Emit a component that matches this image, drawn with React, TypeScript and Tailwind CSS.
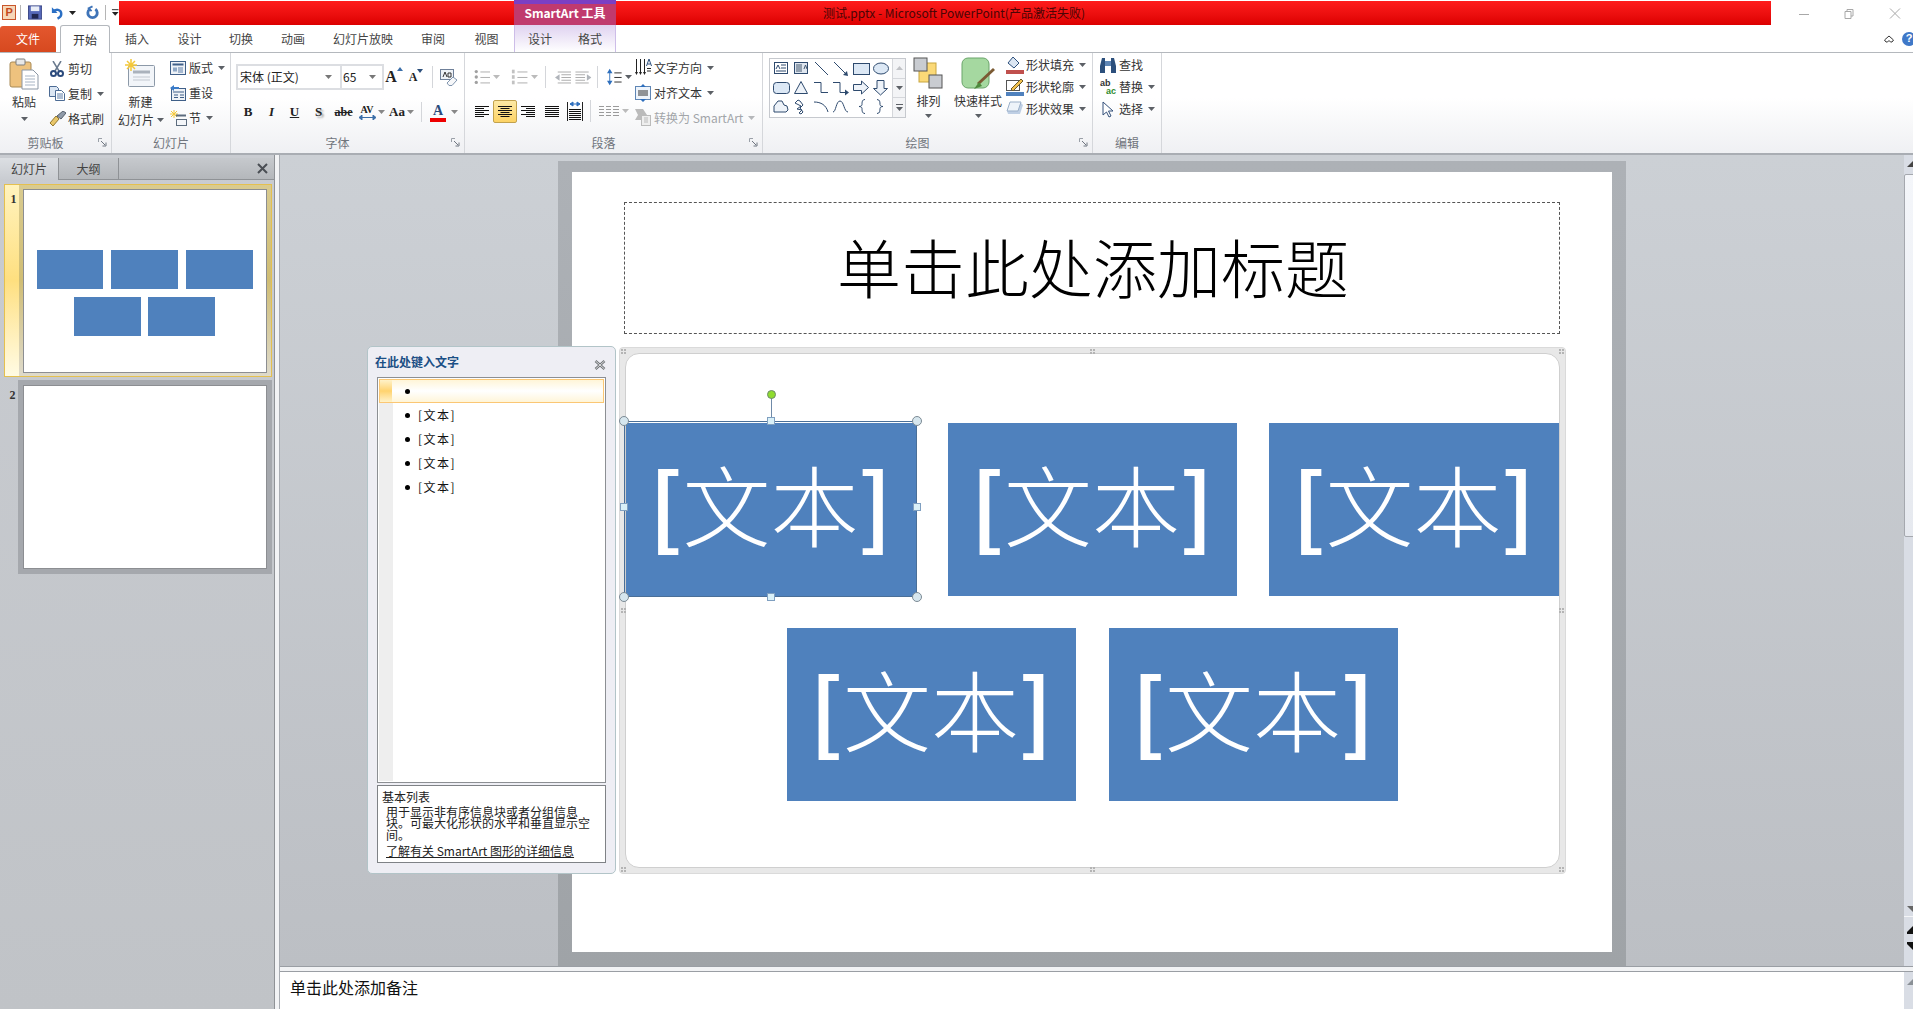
import React from "react";

const Caret = ({ c = "#5c6066" }: { c?: string }) => (
  <svg width="7" height="4" viewBox="0 0 7 4" className="shrink-0">
    <path d="M0 0h7L3.500 4z" fill={c} />
  </svg>
);

const Launcher = () => (
  <svg width="9" height="9" viewBox="0 0 9 9" className="absolute right-[4px] top-[5px]">
    <path d="M0.500 4V0.500H4" fill="none" stroke="#9aa0a8" />
    <path d="M3 3l4 4M8 4.500V8H4.500" fill="none" stroke="#6f7680" />
  </svg>
);

const Sep = ({ h = 22, ml = 0, mr = 0 }: { h?: number; ml?: number; mr?: number }) => (
  <div style={{ height: h, marginLeft: ml, marginRight: mr }} className="w-px bg-[#d4d6da] shrink-0" />
);

const Group = ({
  w,
  label,
  launcher,
  children,
}: {
  w: number;
  label: string;
  launcher?: boolean;
  children: React.ReactNode;
}) => (
  <div style={{ width: w }} className="flex flex-col shrink-0 border-r border-[#d5d7db] h-full">
    <div className="h-[81px] flex">{children}</div>
    <div className={`relative h-[20px] flex items-center justify-center text-[12px] text-[#70757c] ${launcher ? "pr-[20px]" : ""}`}>
      {label}
      {launcher && <Launcher />}
    </div>
  </div>
);

const Row = ({
  icon,
  text,
  caret,
  h = 25,
  gray,
}: {
  icon: React.ReactNode;
  text: string;
  caret?: boolean;
  h?: number;
  gray?: boolean;
}) => (
  <div style={{ height: h }} className={`flex items-center text-[12px] whitespace-nowrap ${gray ? "text-[#a2a5a9]" : "text-[#333]"}`}>
    <div className="w-[18px] flex justify-center shrink-0 mr-[2px]">{icon}</div>
    {text}
    {caret && (
      <span className="ml-[5px]">
        <Caret c={gray ? "#b5b7ba" : "#5c6066"} />
      </span>
    )}
  </div>
);

const Lines = ({ kind }: { kind: "l" | "c" | "r" | "j" }) => {
  const rows = [0, 1, 2, 3, 4, 5];
  const x = (i: number) => {
    const short = i % 2 === 1;
    if (!short || kind === "j") return [0, 14];
    if (kind === "l") return [0, 9];
    if (kind === "r") return [5, 14];
    return [2.500, 11.500];
  };
  return (
    <svg width="14" height="13" viewBox="0 0 14 13">
      {rows.map((i) => (
        <path key={i} d={`M${x(i)[0]} ${i * 2 + 1.500}H${x(i)[1]}`} stroke="#111" />
      ))}
    </svg>
  );
};

const ListIcon = ({ numbered }: { numbered?: boolean }) => (
  <svg width="18" height="16" viewBox="0 0 18 16">
    {[2, 8, 14].map((y) => (
      <g key={y}>
        {numbered ? (
          <path d={`M1 ${y - 2}h3v4h-3z`} fill="#a8a8a8" opacity="0.7" />
        ) : (
          <circle cx="2.500" cy={y} r="1.800" fill="#a0a0a0" />
        )}
        <path d={`M7 ${y + 0.500}H18`} stroke="#a8a8a8" />
      </g>
    ))}
  </svg>
);

const IndentIcon = ({ flip }: { flip?: boolean }) => (
  <svg width="18" height="15" viewBox="0 0 18 15" style={flip ? { transform: "scaleX(-1)" } : undefined}>
    <path d="M0 7.500l5-3.500v7z" fill="#b0b4ba" />
    {[1, 4, 7, 10, 13].map((y, i) => (
      <path key={y} d={`M${i === 0 || i === 4 ? 3 : 7} ${y + 0.500}H18`} stroke="#a6a6a6" />
    ))}
  </svg>
);

const shapes: React.ReactNode[] = [
  <g key="1"><rect x="1.500" y="1.500" width="13" height="11" fill="#fff" stroke="#2e4a6e" /><path d="M3 8l2-4 2 4M8 4h5M8 7h5M3 10h10" stroke="#2e4a6e" fill="none" /></g>,
  <g key="2"><rect x="1.500" y="1.500" width="13" height="11" fill="#dfe6ef" stroke="#2e4a6e" /><path d="M4 3v8M6 3v8M8 3v8M11 8l1.500-4 1.500 4" stroke="#44586f" fill="none" /></g>,
  <path key="3" d="M2 1l13 13" stroke="#2e4a6e" fill="none" />,
  <g key="4"><path d="M1 1l12 12" stroke="#2e4a6e" /><path d="M15 15l-5-1 4-4z" fill="#2e4a6e" /></g>,
  <rect key="5" x="0.500" y="2.500" width="16" height="11" fill="#dce8f5" stroke="#2e4a6e" />,
  <ellipse key="6" cx="8" cy="7.500" rx="7.500" ry="5.500" fill="#dce8f5" stroke="#2e4a6e" />,
  <rect key="7" x="0.500" y="2.500" width="16" height="11" rx="3" fill="#dce8f5" stroke="#2e4a6e" />,
  <path key="8" d="M8 1.500l6.500 12H1.500z" fill="#eef3f9" stroke="#2e4a6e" />,
  <path key="9" d="M1 2.500h7v10h7" fill="none" stroke="#2e4a6e" />,
  <g key="10"><path d="M0 2.500h7v10h6" fill="none" stroke="#2e4a6e" /><path d="M16 12.500l-4-3v6z" fill="#2e4a6e" /></g>,
  <path key="11" d="M0.500 4.500h8V1l7 6.500-7 6.500v-3.500h-8z" fill="#eef3f9" stroke="#2e4a6e" />,
  <path key="12" d="M4 0.500h7v8h3.500L7.500 15 0.500 8.500H4z" fill="#eef3f9" stroke="#2e4a6e" />,
  <path key="13" d="M1 13V7l4-5h4l2 4 3 1 1 4-2 2z" fill="#eef3f9" stroke="#2e4a6e" />,
  <path key="14" d="M5 1l-3 3 6 3-4 3 5 1-3 3 2 1 2-2-3-4 3-3-3-4z" fill="none" stroke="#2e4a6e" />,
  <path key="15" d="M1 3c7 0 12 3 14 10" fill="none" stroke="#2e4a6e" />,
  <path key="16" d="M0 13c3 0 3-11 7-11s4 11 8 11" fill="none" stroke="#2e4a6e" />,
  <path key="17" d="M12 0.500c-3 0-3 3-3 5 0 1-1 2-3 2 2 0 3 1 3 2 0 2 0 5 3 5" fill="none" stroke="#2e4a6e" />,
  <path key="18" d="M4 0.500c3 0 3 3 3 5 0 1 1 2 3 2-2 0-3 1-3 2 0 2 0 5-3 5" fill="none" stroke="#2e4a6e" />,
];

const Ribbon = () => (
  <div className="h-[102px] flex bg-gradient-to-b from-white from-45% to-[#eff0f3] border-b-2 border-[#a9adb3]">
    <Group w={112} label="剪贴板" launcher>
      <div className="w-[48px] flex flex-col items-center pt-[5px]">
        <svg width="30" height="32" viewBox="0 0 30 32">
          <rect x="1" y="4" width="21" height="25" rx="2" fill="#eec27e" stroke="#a88a56" />
          <rect x="7" y="1" width="9" height="6" rx="1" fill="#e8e8e8" stroke="#7d7d7d" />
          <path d="M13 12h11l5 5v14H13z" fill="#fff" stroke="#8b97a5" />
          <path d="M16 18h10M16 21h10M16 24h10M16 27h10" stroke="#a7b4c4" />
        </svg>
        <div className="h-[20px] mt-[2px] flex items-center text-[12px] text-[#333]">粘贴</div>
        <div className="mt-[5px]"><Caret /></div>
      </div>
      <div className="flex flex-col pt-[3px]">
        <Row
          text="剪切"
          icon={
            <svg width="14" height="16" viewBox="0 0 14 16">
              <path d="M3 0l6 10M11 0L5 10" stroke="#6a7a8e" strokeWidth="1.500" />
              <circle cx="3.500" cy="12.500" r="2.500" fill="none" stroke="#2b4a7c" strokeWidth="2" />
              <circle cx="10.500" cy="12.500" r="2.500" fill="none" stroke="#2b4a7c" strokeWidth="2" />
            </svg>
          }
        />
        <Row
          text="复制"
          caret
          icon={
            <svg width="16" height="15" viewBox="0 0 16 15">
              <path d="M0.500 0.500h7l2 2v8h-9z" fill="#dbe6f3" stroke="#4c6b94" />
              <path d="M6.500 4.500h6l3 3v7h-9z" fill="#fff" stroke="#4c6b94" />
              <path d="M8 8h6M8 10h6M8 12h6" stroke="#5f7ea8" />
            </svg>
          }
        />
        <Row
          text="格式刷"
          icon={
            <svg width="17" height="15" viewBox="0 0 17 15">
              <path d="M1 12l6-7 3 3-6 7z" fill="#e8c66a" stroke="#93782f" />
              <path d="M8 5l6-5 3 2-5 6z" fill="#8f9aa8" stroke="#555e6a" />
            </svg>
          }
        />
      </div>
    </Group>
    <Group w={119} label="幻灯片">
      <div className="w-[56px] flex flex-col items-center pt-[6px]">
        <svg width="30" height="29" viewBox="0 0 30 29">
          <rect x="3.500" y="6.500" width="26" height="21" rx="1" fill="#f2f5f9" stroke="#8c99a8" />
          <path d="M8 13h17" stroke="#aab2bc" strokeWidth="3" />
          <path d="M8 18h17M8 21h17" stroke="#c3c9d1" />
          <path d="M6 0v12M0 6h12M2 2l8 8M10 2l-8 8" stroke="#f4c83a" strokeWidth="1.500" />
        </svg>
        <div className="h-[20px] mt-[4px] ml-[1px] flex items-center text-[12px] text-[#333]">新建</div>
        <div className="h-[16px] flex items-center gap-[3px] text-[12px] text-[#333] whitespace-nowrap ml-[2px]">幻灯片<Caret /></div>
      </div>
      <div className="flex flex-col pt-[2px] pl-[1px]">
        <Row
          text="版式"
          caret
          icon={
            <svg width="16" height="14" viewBox="0 0 16 14">
              <rect x="0.500" y="0.500" width="15" height="13" fill="#eef2f7" stroke="#3f5f88" />
              <path d="M2.500 3.500h11" stroke="#3f5f88" strokeWidth="2" />
              <path d="M3 6.500h4v4H3z" fill="#8fa8c6" />
              <path d="M8 7h5M8 9h5M8 11h5" stroke="#5f7ea8" />
            </svg>
          }
        />
        <Row
          text="重设"
          icon={
            <svg width="16" height="16" viewBox="0 0 16 16">
              <rect x="1.500" y="3.500" width="14" height="12" fill="#eef2f7" stroke="#3f5f88" />
              <path d="M3 7h11M4 10h4M4 12.500h4M10 10h4M10 12.500h4" stroke="#3f5f88" />
              <path d="M0 3l4-3v2h5v2H4v2z" fill="#3a7bc8" />
            </svg>
          }
        />
        <Row
          text="节"
          caret
          icon={
            <svg width="17" height="16" viewBox="0 0 17 16">
              <path d="M4 0v8M0 4h8M1 1l6 6M7 1L1 7" stroke="#f4c83a" />
              <path d="M6 5.500h10" stroke="#5d6c7e" strokeWidth="2" />
              <rect x="6.500" y="9.500" width="10" height="6" fill="#f4f6f9" stroke="#5d6c7e" />
            </svg>
          }
        />
      </div>
    </Group>
    <Group w={234} label="字体" launcher>
      <div className="flex flex-col pl-[5px] pt-[11px]">
        <div className="flex items-center h-[26px]">
          <div className="w-[104px] h-[26px] border-2 border-r-0 border-[#dcdee2] bg-white flex items-center justify-between pl-[2px] pr-[8px] text-[12px] text-[#222]">
            宋体 (正文)
            <Caret c="#777" />
          </div>
          <div className="w-[44px] h-[26px] border-2 border-[#dcdee2] bg-white flex items-center justify-between pl-[1px] pr-[6px] text-[12px] text-[#222]">
            65
            <Caret c="#777" />
          </div>
          <div className="w-[22px] ml-[-1px] text-center font-['Liberation_Serif',serif] font-bold text-[16px] text-[#222] flex justify-center items-start">
            A<svg width="6" height="4" viewBox="0 0 6 4" className="mt-[2px]"><path d="M0 4h6L3 0z" fill="#3a6ea8" /></svg>
          </div>
          <div className="w-[22px] text-center font-['Liberation_Serif',serif] font-bold text-[12px] text-[#222] flex justify-center items-start">
            A<svg width="6" height="4" viewBox="0 0 6 4" className="mt-[1px]"><path d="M0 0h6L3 4z" fill="#2c4f7c" /></svg>
          </div>
          <Sep ml={5} mr={7} />
          <svg width="18" height="17" viewBox="0 0 18 17">
            <rect x="0.500" y="0.500" width="13" height="10" fill="#eef2f7" stroke="#6f8099" />
            <path d="M3 8l2-5 2 5M8 8V4h3v4z" fill="none" stroke="#333" />
            <path d="M7 14l6-6 4 3-5 5.500H9z" fill="#f6f7f9" stroke="#7f94ad" />
          </svg>
        </div>
        <div className="flex items-center h-[26px] mt-[9px] font-['Liberation_Serif',serif] text-[#222]">
          <div className="w-[24px] text-center font-bold text-[13px]">B</div>
          <div className="w-[23px] text-center italic font-bold text-[13px]">I</div>
          <div className="w-[23px] text-center font-bold text-[13px] underline">U</div>
          <div className="w-[25px] text-center font-bold text-[13px] [text-shadow:2px_2px_2px_#999]">S</div>
          <div className="w-[25px] text-center font-bold text-[12px] line-through">abe</div>
          <div className="w-[29px] flex items-center">
            <div className="flex flex-col items-center w-[22px]">
              <span className="text-[10px] font-bold leading-[10px]">AV</span>
              <svg width="17" height="5" viewBox="0 0 17 5"><path d="M0 2.500l3-2.500v5zM17 2.500l-3-2.500v5zM3 2.500h11" fill="#3a6ea8" stroke="#3a6ea8" /></svg>
            </div>
            <Caret c="#888" />
          </div>
          <div className="w-[33px] flex items-center justify-center gap-[2px] font-bold text-[13px]">Aa<Caret c="#888" /></div>
          <Sep ml={3} mr={8} h={20} />
          <div className="flex flex-col items-center w-[16px]">
            <span className="text-[14px] font-bold text-[#2a4b7c] leading-[15px]">A</span>
            <div className="w-[16px] h-[4px] bg-[#ee0000]" />
          </div>
          <span className="ml-[5px]"><Caret c="#888" /></span>
        </div>
      </div>
    </Group>
    <Group w={298} label="段落" launcher>
      <div className="w-[167px] flex flex-col pt-[11px] pl-[9px]">
        <div className="flex items-center h-[26px]">
          <ListIcon />
          <span className="ml-[3px] mr-[11px]"><Caret c="#bbb" /></span>
          <ListIcon numbered />
          <span className="ml-[3px]"><Caret c="#bbb" /></span>
          <Sep ml={7} mr={9} />
          <IndentIcon />
          <span className="w-[4px]" />
          <IndentIcon flip />
          <Sep ml={6} mr={9} />
          <svg width="16" height="18" viewBox="0 0 16 18">
            <path d="M3 0l3 5H0zM3 18l3-5H0z" fill="#2e6fbd" />
            <path d="M3 4v10" stroke="#2e6fbd" />
            <path d="M8 4.500h8M8 9.500h8M8 14.500h8" stroke="#222" />
          </svg>
          <span className="ml-[3px]"><Caret /></span>
        </div>
        <div className="flex items-center h-[26px] mt-[8px]">
          <span className="ml-[1px]"><Lines kind="l" /></span>
          <div className="w-[24px] h-[23px] mx-[4px] rounded-[2px] border border-[#c2a24e] bg-gradient-to-b from-[#fde9a4] to-[#fdd364] flex items-center justify-center"><Lines kind="c" /></div>
          <Lines kind="r" />
          <span className="w-[10px]" />
          <Lines kind="j" />
          <span className="w-[8px]" />
          <svg width="16" height="20" viewBox="0 0 16 20">
            <path d="M0.500 1v19M15.500 1v19" stroke="#222" />
            <path d="M3 3h10M3 3l3-2v4zM13 3l-3-2v4z" fill="#2e6fbd" stroke="#2e6fbd" />
            {[8, 10, 12, 14, 16, 18].map((y) => <path key={y} d={`M2 ${y + 0.500}H14`} stroke="#111" />)}
          </svg>
          <Sep ml={7} mr={8} />
          <svg width="20" height="13" viewBox="0 0 20 13">
            {[1, 4, 7, 10].map((y) => <path key={y} d={`M0 ${y + 0.500}h5M7 ${y + 0.500}h5M14 ${y + 0.500}h6`} stroke="#9a9a9a" />)}
          </svg>
          <span className="ml-[3px]"><Caret c="#bbb" /></span>
        </div>
      </div>
      <div className="flex flex-col pt-[2px] pl-[2px]">
        <Row
          text="文字方向"
          caret
          icon={
            <svg width="17" height="17" viewBox="0 0 17 17">
              <path d="M1.500 0v14M5.500 0v14M9.500 0v14" stroke="#222" />
              <path d="M0 13l1.500 3 1.500-3zM4 13l1.500 3 1.500-3zM8 13l1.500 3 1.500-3z" fill="#222" />
              <path d="M11.500 7l2.500-7 2.500 7M12.500 5h3" fill="none" stroke="#2c4f7c" />
              <path d="M12 9.500h4M12 12h4" stroke="#222" />
            </svg>
          }
        />
        <Row
          text="对齐文本"
          caret
          icon={
            <svg width="16" height="18" viewBox="0 0 16 18">
              <rect x="0.500" y="2.500" width="15" height="13" fill="#eef4fb" stroke="#5f86b5" />
              <path d="M3 7h10M3 9h10M3 11h10" stroke="#333" />
              <path d="M8 0l3 3H5zM8 18l3-3H5z" fill="#2e6fbd" />
            </svg>
          }
        />
        <Row
          text="转换为 SmartArt"
          caret
          gray
          icon={
            <svg width="16" height="17" viewBox="0 0 16 17">
              <path d="M0 0h8l4 6-4 5H0l3-5z" fill="#bbb" />
              <rect x="6.500" y="6.500" width="9" height="10" fill="#eee" stroke="#bbb" />
              <path d="M9 9h4M9 11h4M9 13h4" stroke="#bbb" />
            </svg>
          }
        />
      </div>
    </Group>
    <Group w={330} label="绘图" launcher>
      <div className="ml-[6px] mt-[5px] h-[60px] w-[137px] flex border border-[#c6c9ce] bg-white shrink-0">
        <div className="w-[122px] grid grid-cols-6 grid-rows-3 items-center justify-items-center pl-[1px]">
          {shapes.map((s, i) => (
            <svg key={i} width="17" height="16" viewBox="0 0 17 16" fill="none">{s}</svg>
          ))}
        </div>
        <div className="flex-1 flex flex-col bg-[#f3f4f6] border-l border-[#d5d7db]">
          <div className="flex-1 flex items-center justify-center border-b border-[#d5d7db]">
            <svg width="7" height="4" viewBox="0 0 7 4"><path d="M0 4h7L3.500 0z" fill="#c0c2c6" /></svg>
          </div>
          <div className="flex-1 flex items-center justify-center border-b border-[#d5d7db]"><Caret /></div>
          <div className="flex-1 flex flex-col gap-[2px] items-center justify-center">
            <div className="w-[7px] h-px bg-[#5c6066]" />
            <Caret />
          </div>
        </div>
      </div>
      <div className="w-[45px] flex flex-col items-center pt-[4px] shrink-0">
        <svg width="32" height="34" viewBox="0 0 32 34">
          <rect x="6" y="6" width="17" height="19" fill="#fbd977" stroke="#c8a53f" />
          <rect x="1" y="1" width="13" height="13" fill="#c9ccd1" stroke="#555" />
          <rect x="16" y="18" width="13" height="13" fill="#c9ccd1" stroke="#555" />
        </svg>
        <div className="h-[18px] mt-[1px] flex items-center text-[12px] text-[#333]">排列</div>
        <div className="mt-[4px]"><Caret /></div>
      </div>
      <div className="w-[54px] flex flex-col items-center pt-[4px] shrink-0">
        <svg width="34" height="34" viewBox="0 0 34 34">
          <rect x="1" y="1" width="27" height="30" rx="6" fill="#a5d8a0" stroke="#6aa56a" />
          <path d="M33 12L17 27" stroke="#7b5a33" strokeWidth="3" />
          <path d="M18 25l-5 7 8-3z" fill="#4d8a3d" />
        </svg>
        <div className="h-[18px] mt-[1px] flex items-center text-[12px] text-[#333] whitespace-nowrap">快速样式</div>
        <div className="mt-[4px]"><Caret /></div>
      </div>
      <div className="flex flex-col pt-[1px] pl-[1px]">
        <Row
          h={22}
          text="形状填充"
          caret
          icon={
            <svg width="18" height="18" viewBox="0 0 18 18">
              <path d="M7 1l6 6-5 5-6-5z" fill="#dbe6f3" stroke="#2c4f7c" />
              <rect x="0" y="14" width="18" height="4" fill="#c0504d" />
            </svg>
          }
        />
        <Row
          h={22}
          text="形状轮廓"
          caret
          icon={
            <svg width="18" height="18" viewBox="0 0 18 18">
              <rect x="0.500" y="2.500" width="13" height="10" fill="#fff" stroke="#555" />
              <path d="M5 11L15 1l2 2L7 13z" fill="#f2c14e" stroke="#6b5a2a" />
              <rect x="0" y="14" width="18" height="4" fill="#4f81bd" />
            </svg>
          }
        />
        <Row
          h={22}
          text="形状效果"
          caret
          icon={
            <svg width="18" height="16" viewBox="0 0 18 16">
              <path d="M4 2h11l2 2-3 9H2L1 10z" fill="#bfcfe4" />
              <path d="M4 1h11L12 10H1z" fill="#eef3f9" stroke="#9bb0c9" />
            </svg>
          }
        />
      </div>
    </Group>
    <Group w={69} label="编辑">
      <div className="flex flex-col pt-[1px] pl-[6px]">
        <Row
          h={22}
          text="查找"
          icon={
            <svg width="18" height="17" viewBox="0 0 18 17">
              <path d="M1 9l2-8h3v15H1zM17 9l-2-8h-3v15h5z" fill="#2c4f7c" />
              <rect x="6" y="4" width="6" height="5" fill="#5f86b5" />
            </svg>
          }
        />
        <Row
          h={22}
          text="替换"
          caret
          icon={
            <div className="font-['Liberation_Sans',sans-serif] text-[9px] leading-[8px] font-bold">
              <div className="text-[#333]">ab</div>
              <div className="text-[#2e8b2e] pl-[6px]">ac</div>
            </div>
          }
        />
        <Row
          h={22}
          text="选择"
          caret
          icon={
            <svg width="13" height="17" viewBox="0 0 13 17">
              <path d="M1 1v13l3.500-3 2.500 5 2-1-2.500-5H11z" fill="#fff" stroke="#34507a" />
            </svg>
          }
        />
      </div>
    </Group>
    <div className="flex-1" />
  </div>
);

const Title = () => (
  <div className="h-[25px] flex items-stretch bg-white">
    <div className="w-[119px] flex items-center shrink-0 pl-[2px]">
      <div className="w-[15px] h-[15px] border border-[#c9562b] bg-[#f6d7b8] flex items-center justify-center text-[11px] font-bold text-[#c4491d] font-['Liberation_Sans',sans-serif]">P</div>
      <div className="w-px h-[15px] bg-[#b5b5b5] ml-[4px] mr-[7px]" />
      <svg width="15" height="15" viewBox="0 0 15 15">
        <rect x="0.500" y="0.500" width="14" height="14" fill="#5668b8" stroke="#3a4686" />
        <rect x="3" y="1" width="9" height="5" fill="#e9edf6" />
        <rect x="4" y="9" width="7" height="5" fill="#20264f" />
      </svg>
      <svg width="15" height="14" viewBox="0 0 15 14" className="ml-[8px]">
        <path d="M2 1v6h6" fill="#2a6fc4" />
        <path d="M3 6c3-4 9-3 9 2 0 2-2 4-4 5" fill="none" stroke="#2a6fc4" strokeWidth="2.500" />
      </svg>
      <span className="ml-[5px]"><Caret c="#222" /></span>
      <svg width="15" height="15" viewBox="0 0 15 15" className="ml-[9px]">
        <path d="M8 1L4 3l3 3" fill="none" stroke="#3f74b8" strokeWidth="2" />
        <path d="M5 4a5 5 0 1 0 6 0" fill="none" stroke="#3f74b8" strokeWidth="3" />
      </svg>
      <div className="w-px h-[15px] bg-[#b5b5b5] ml-[5px] mr-[5px]" />
      <svg width="9" height="9" viewBox="0 0 9 9"><path d="M1 1.500h7" stroke="#222" /><path d="M1 4h7L4.500 8z" fill="#222" /></svg>
    </div>
    <div className="w-[395px] mt-px bg-gradient-to-b from-[#ff1c1c] to-[#dc0000] shrink-0" />
    <div className="w-[102px] shrink-0 flex flex-col">
      <div className="h-[4px] bg-[#7b3fc4]" />
      <div className="flex-1 bg-[#c03a6e] flex items-center justify-center text-white font-bold text-[12px] pb-[3px]">SmartArt 工具</div>
    </div>
    <div className="w-[1155px] mt-px pl-[207px] bg-gradient-to-b from-[#ff1c1c] to-[#dc0000] flex items-center text-[12px] text-[#4a0505] whitespace-nowrap shrink-0">
      测试.pptx - Microsoft PowerPoint(产品激活失败)
    </div>
    <div className="flex-1 flex items-center pl-[28px] pt-[3px]">
      <svg width="110" height="14" viewBox="0 0 110 14">
        <path d="M0 7.500h10" stroke="#a8a8a8" />
        <path d="M46 4.500h6v7h-6zM48 4V2.500h6V9h-2" fill="none" stroke="#a8a8a8" />
        <path d="M91 1.500l10 10M101 1.500l-10 10" stroke="#a8a8a8" />
      </svg>
    </div>
  </div>
);

const tabs: [string, number][] = [
  ["插入", 54],
  ["设计", 51],
  ["切换", 52],
  ["动画", 52],
  ["幻灯片放映", 88],
  ["审阅", 52],
  ["视图", 55],
];

const Tabs = () => (
  <div className="h-[28px] flex items-stretch bg-white border-b border-[#b4b8bd] text-[12px] text-[#444]">
    <div className="w-[56px] mt-[1px] rounded-t-[3px] bg-gradient-to-b from-[#e4572e] to-[#d7491f] text-white flex items-center justify-center shrink-0">文件</div>
    <div className="w-[50px] ml-[4px] -mb-px bg-white border border-b-0 border-[#b4b8bd] rounded-t-[3px] flex items-center justify-center text-[#333] shrink-0">开始</div>
    {tabs.map(([t, w]) => (
      <div key={t} style={{ width: w }} className="flex items-center justify-center shrink-0">{t}</div>
    ))}
    <div className="w-[102px] flex shrink-0 bg-gradient-to-b from-[#dfd2f0] to-white border-x border-[#cdbde8]">
      <div className="w-[51px] flex items-center justify-center">设计</div>
      <div className="w-[51px] flex items-center justify-center">格式</div>
    </div>
    <div className="flex-1 flex items-center justify-end -mr-[3px] gap-[8px]">
      <svg width="10" height="8" viewBox="0 0 10 8"><path d="M0.500 5l4.500-4 4.500 4-1.500 2H6.500L5 5.500 3.500 7H2z" fill="none" stroke="#333" /></svg>
      <div className="w-[14px] h-[14px] rounded-full bg-[#3f78c8] text-white text-[11px] font-bold flex items-center justify-center font-['Liberation_Sans',sans-serif]">?</div>
    </div>
  </div>
);

const Thumb = ({ filled }: { filled?: boolean }) => (
  <div className="w-[244px] h-[184px] bg-white border border-[#8c8e92] shrink-0 flex flex-col items-center pt-[60px] gap-[8px]">
    {filled && (
      <>
        <div className="flex gap-[8px]">
          <div className="w-[66px] h-[39px] bg-[#4f81bd]" />
          <div className="w-[67px] h-[39px] bg-[#4f81bd]" />
          <div className="w-[67px] h-[39px] bg-[#4f81bd]" />
        </div>
        <div className="flex gap-[7px] -ml-[1px]">
          <div className="w-[67px] h-[39px] bg-[#4f81bd]" />
          <div className="w-[67px] h-[39px] bg-[#4f81bd]" />
        </div>
      </>
    )}
  </div>
);

const SlidePanel = () => (
  <div className="w-[275px] shrink-0 border-r border-[#8f9296] bg-gradient-to-b from-[#c9ccd1] to-[#c0c3c7] flex flex-col">
    <div className="h-[2px] mt-px" />
    <div className="h-[22px] flex bg-gradient-to-b from-[#c6c9cd] to-[#b4b7bb] border-b border-[#8f9296] text-[12px] text-[#444]">
      <div className="w-[59px] bg-gradient-to-b from-[#dcdfe3] to-[#c9ccd1] border-r border-[#8f9296] flex items-center justify-center -mb-px">幻灯片</div>
      <div className="w-[60px] border-r border-[#8f9296] flex items-center justify-center">大纲</div>
      <div className="flex-1 flex items-center justify-end pr-[6px]">
        <svg width="11" height="11" viewBox="0 0 11 11"><path d="M1 1l9 9M10 1l-9 9" stroke="#4a4e54" strokeWidth="2" /></svg>
      </div>
    </div>
    <div className="ml-[4px] mt-[4px] w-[268px] h-[193px] flex border border-[#e4c04f] relative">
      <div className="w-[14px] bg-gradient-to-b from-[#fff3bd] via-[#fedf7f] to-[#fffbe3] flex justify-center pt-[5px] shrink-0 font-['Liberation_Serif',serif] font-bold text-[12px] text-[#333] pl-[3px]">1</div>
      <div className="flex-1 bg-gradient-to-b from-[#d9cb90] via-[#d0bd74] to-[#dedacb] px-[4px] pt-[4px]">
        <Thumb filled />
      </div>
    </div>
    <div className="ml-[4px] mt-[3px] w-[268px] h-[194px] flex">
      <div className="w-[14px] flex justify-center pt-[6px] shrink-0 font-['Liberation_Serif',serif] font-bold text-[12px] text-[#333] pl-[3px]">2</div>
      <div className="flex-1 bg-[#a5a8ad] px-[5px] pt-[5px]">
        <Thumb />
      </div>
    </div>
  </div>
);

const Handle = ({ round, className }: { round?: boolean; className: string }) => (
  <div className={`absolute ${round ? "w-[10px] h-[10px] rounded-full border-[#7c8a94] bg-[#d6e6ee]" : "w-[8px] h-[8px] border-[#7f9fc0] bg-[#d9f0f8]"} border ${className}`} />
);

const Box = ({ selected, w = 290 }: { selected?: boolean; w?: number }) => (
  <div style={{ width: w }} className="relative h-[173px] bg-[#4f81bd] flex items-center justify-center text-white text-[88px] font-light leading-none pb-[14px]">
    <span className="font-bold">[</span>文本<span className="font-bold">]</span>
    {selected && (
      <>
        <div className="absolute -left-[2px] -right-[1px] -top-[2px] -bottom-px border border-[#4a6f98]" />
        <div className="absolute left-[145px] -top-[26px] h-[24px] w-px bg-[#6f8aa8]" />
        <div className="absolute left-[141px] -top-[33px] w-[9px] h-[9px] rounded-full bg-[#8fdc2e] border border-[#6d8a6d]" />
        <Handle round className="-left-[7px] -top-[7px]" />
        <Handle round className="-right-[6px] -top-[7px]" />
        <Handle round className="-left-[7px] -bottom-[6px]" />
        <Handle round className="-right-[6px] -bottom-[6px]" />
        <Handle className="left-[141px] -top-[6px]" />
        <Handle className="left-[141px] -bottom-[5px]" />
        <Handle className="-left-[6px] top-[80px]" />
        <Handle className="-right-[5px] top-[80px]" />
      </>
    )}
  </div>
);

const TextPane = () => (
  <div className="absolute left-[87px] top-[191px] w-[249px] h-[528px] rounded-[5px] bg-[#eeeef4] border border-[#b2c4c8] flex flex-col px-[9px]">
    <div className="h-[30px] flex items-center justify-between pr-[0px] -ml-[2px]">
      <span className="text-[12px] font-bold text-[#1b4f85] whitespace-nowrap">在此处键入文字</span>
      <svg width="12" height="10" viewBox="0 0 12 10" className="mt-[6px]">
        <path d="M1.500 1l9 8M10.500 1l-9 8" stroke="#6f7377" strokeWidth="2.500" />
        <path d="M1.500 1l9 8M10.500 1l-9 8" stroke="#f4f4f4" strokeWidth="0.800" />
      </svg>
    </div>
    <div className="h-[406px] bg-white border border-[#8c8f93] flex shrink-0 relative">
      <div className="w-[14px] bg-[#eeeeee] ml-px my-px shrink-0" />
      <div className="flex-1 flex flex-col pt-[1px] text-[12px] text-[#111]">
        {["", "[文本]", "[文本]", "[文本]", "[文本]"].map((t, i) => (
          <div key={i} className="h-[24px] flex items-center pl-[12px] gap-[7px] tracking-[1.500px]">
            <span className="w-[5px] h-[5px] rounded-full bg-black shrink-0 mr-[1px]" />
            {t}
          </div>
        ))}
      </div>
      <div className="absolute left-px top-px right-px h-[24px] border border-[#fbc774] bg-gradient-to-b from-[#fff5d8] via-white to-[#fff5d8] flex items-center pl-[25px]">
        <div className="absolute left-0 top-0 bottom-0 w-[12px] bg-gradient-to-b from-[#fff2c8] via-[#ffd36e] to-[#fff2c8]" />
        <span className="w-[5px] h-[5px] rounded-full bg-black" />
      </div>
    </div>
    <div className="mt-[2px] h-[78px] bg-white border border-[#7f8286] text-[12px] leading-[11.500px] text-[#222] pl-[4px] pt-[5px]">
      <div className="mb-[3px]">基本列表</div>
      <div className="pl-[4px]">
        用于显示非有序信息块或者分组信息
        <br />
        块。可最大化形状的水平和垂直显示空
        <br />
        间。
      </div>
      <div className="pl-[4px] mt-[5px] underline whitespace-nowrap">了解有关 SmartArt 图形的详细信息</div>
    </div>
  </div>
);

const Grip = ({ className }: { className: string }) => (
  <div className={`absolute grid grid-cols-2 gap-px ${className}`}>
    <i className="w-[2px] h-[2px] bg-[#b4b4b4]" />
    <i className="w-[2px] h-[2px] bg-[#b4b4b4]" />
    <i className="w-[2px] h-[2px] bg-[#b4b4b4]" />
    <i className="w-[2px] h-[2px] bg-[#b4b4b4]" />
  </div>
);

const Slide = () => (
  <div className="w-[1040px] h-[780px] bg-white shrink-0 flex flex-col items-center pt-[30px]">
    <div className="w-[936px] h-[132px] border border-dashed border-[#555] flex items-center justify-center text-[64px] font-light text-black whitespace-nowrap pl-[2px] pb-[7px]">
      单击此处添加标题
    </div>
    <div className="relative mt-[13px] w-[947px] h-[527px] rounded-[4px] border border-[#dadada] bg-[#e8e8e8] p-[5px] shrink-0">
      <Grip className="left-px top-px" />
      <Grip className="right-px top-px" />
      <Grip className="left-px bottom-px" />
      <Grip className="right-px bottom-px" />
      <Grip className="left-[470px] top-px" />
      <Grip className="left-[470px] bottom-px" />
      <Grip className="left-px top-[260px]" />
      <Grip className="right-px top-[260px]" />
      <div className="w-full h-full bg-white rounded-[14px] border border-[#cfcfcf] flex flex-col justify-center gap-[32px] items-center pt-[2px]">
        <div className="flex gap-[32px]">
          <Box selected />
          <Box w={289} />
          <Box />
        </div>
        <div className="flex gap-[33px]">
          <Box w={289} />
          <Box w={289} />
        </div>
      </div>
    </div>
  </div>
);

const Tri = ({ up, c = "#444" }: { up?: boolean; c?: string }) => (
  <svg width="14" height="7" viewBox="0 0 14 7" className="shrink-0">
    <path d={up ? "M0 7h14L7 0z" : "M0 0h14L7 7z"} fill={c} />
  </svg>
);

const Scroll = () => (
  <div className="w-[9px] shrink-0 bg-[#d9dde5] overflow-hidden flex flex-col">
    <div className="h-[19px] pt-[5px] pl-[3px] flex shrink-0"><Tri up /></div>
    <div className="h-[363px] w-[20px] bg-gradient-to-b from-[#f4f6fa] to-[#e6e9ef] border border-[#a5a8ae] rounded-[2px] shrink-0" />
    <div className="flex-1" />
    <div className="h-[10px] pl-[3px] flex shrink-0"><Tri c="#666" /></div>
    <div className="h-[50px] pl-[3px] pt-[8px] border-t border-[#f4f5f7] flex flex-col gap-[6px] shrink-0">
      <div className="flex flex-col"><Tri up c="#111" /><div className="w-[14px] h-[2px] bg-[#111]" /></div>
      <div className="flex flex-col mt-[2px]"><div className="w-[14px] h-[2px] bg-[#111]" /><Tri c="#111" /></div>
    </div>
  </div>
);

export default function App() {
  return (
    <div className="w-[1913px] h-[1009px] overflow-hidden flex flex-col bg-white font-['Noto_Sans_CJK_SC','Liberation_Sans',sans-serif]">
      <Title />
      <Tabs />
      <Ribbon />
      <div className="flex-1 flex min-h-0">
        <SlidePanel />
        <div className="w-[5px] bg-[#f2f3f5] border-r border-[#a9adb3] shrink-0" />
        <div className="flex-1 flex flex-col min-w-0">
          <div className="h-[811px] flex shrink-0">
            <div className="relative flex-1 flex justify-center bg-gradient-to-b from-[#ccd0d5] to-[#bcbfc4] pt-[6px]">
              <div className="w-[1068px] h-[805px] bg-gradient-to-b from-[#adb1b6] to-[#9fa3a7] px-[14px] pt-[11px]">
                <Slide />
              </div>
              <TextPane />
            </div>
            <Scroll />
          </div>
          <div className="h-[6px] bg-[#f2f3f5] border-y border-[#9a9ea4] shrink-0" />
          <div className="flex-1 flex">
            <div className="flex-1 bg-white pl-[10px] pt-[3px] text-[16px] text-[#111]">单击此处添加备注</div>
            <div className="w-[9px] bg-[#d9dde5] overflow-hidden pt-[6px] pl-[3px]"><Tri up c="#8a9096" /></div>
          </div>
        </div>
      </div>
    </div>
  );
}
